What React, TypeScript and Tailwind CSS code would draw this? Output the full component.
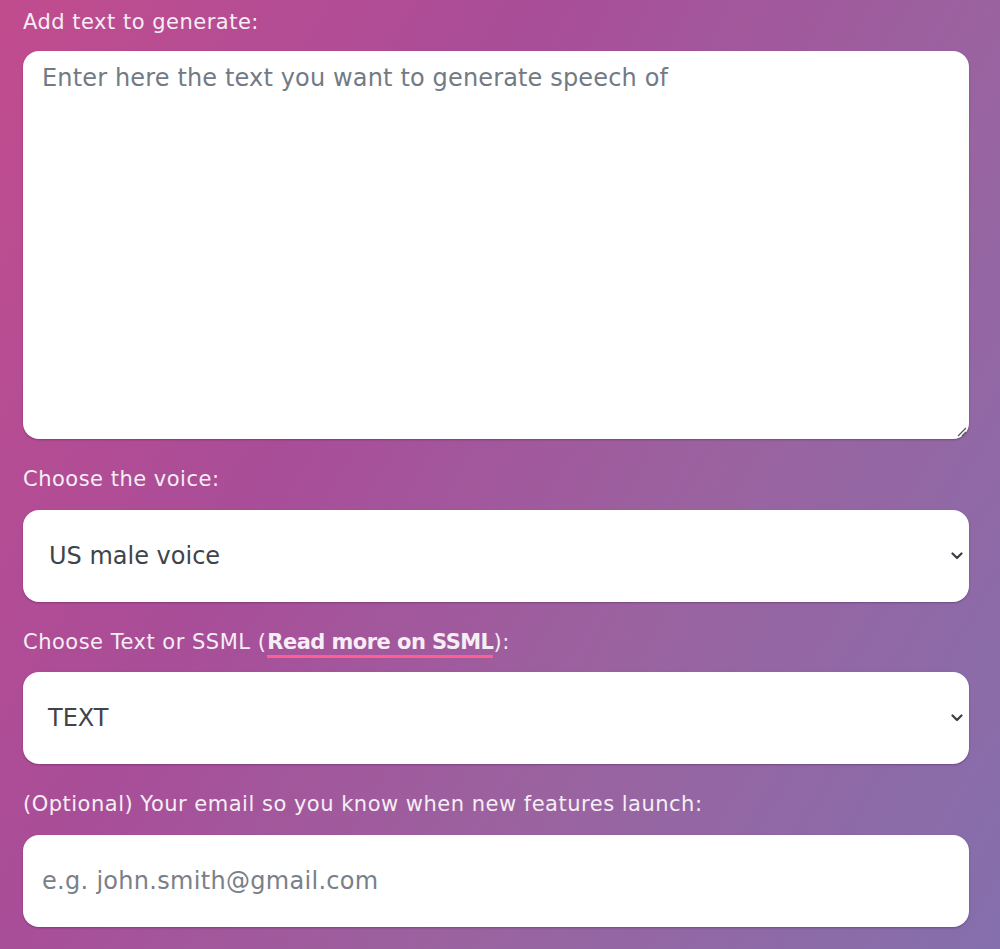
import React from "react";

const font = { fontFamily: '"DejaVu Sans", "Open Sans", sans-serif' };

function Chevron() {
  return (
    <svg width="12" height="8" viewBox="0 0 12 8" className="shrink-0">
      <path d="M1.5 1.5 L6 6 L10.5 1.5" fill="none" stroke="#3a3f46" strokeWidth="2.2" strokeLinecap="round" strokeLinejoin="round" />
    </svg>
  );
}

export default function App() {
  return (
    <div
      className="min-h-[949px] w-full bg-[linear-gradient(120deg,#c14c8e_0%,#a94d98_35%,#9a63a0_65%,#846fac_100%)] px-[23px] pt-[10px] pb-[22px] text-[#f6eef4]"
      style={font}
    >
      <label className="block text-[21px] leading-[24px] tracking-[0.5px]">Add text to generate:</label>
      <div className="relative mt-[17px] h-[388px] w-[946px] rounded-[16px] bg-white shadow-[0_1px_2px_rgba(60,20,70,0.35)]">
        <div className="px-[19px] pt-[12px] text-[24px] leading-[30px] tracking-[0.15px] text-[#727a84]">
          Enter here the text you want to generate speech of
        </div>
        <svg className="absolute bottom-[2px] right-[2px]" width="12" height="12" viewBox="0 0 12 12">
          <path d="M11 3 L3 11 M11 7 L7 11" stroke="#555" strokeWidth="1.2" />
        </svg>
      </div>

      <label className="mt-[28px] block text-[21px] leading-[24px] tracking-[0.5px]">Choose the voice:</label>
      <div className="mt-[19px] flex h-[92px] w-[946px] items-center justify-between rounded-[16px] bg-white pl-[26px] pr-[6px] shadow-[0_1px_2px_rgba(60,20,70,0.35)]">
        <span className="text-[24px] text-[#3f444b]">US male voice</span>
        <Chevron />
      </div>

      <label className="mt-[28px] block text-[21px] leading-[24px] tracking-[0.5px]">
        Choose Text or SSML (
        <span className="ml-[1px] font-bold tracking-[-0.55px] border-b-[3px] border-[#ff5f8f] pb-[1px]">Read more on SSML</span>
        ):
      </label>
      <div className="mt-[18px] flex h-[92px] w-[946px] items-center justify-between rounded-[16px] bg-white pl-[25px] pr-[6px] shadow-[0_1px_2px_rgba(60,20,70,0.35)]">
        <span className="text-[24px] text-[#3f444b]">TEXT</span>
        <Chevron />
      </div>

      <label className="mt-[28px] block text-[21px] leading-[24px] tracking-[0.5px]">
        (Optional) Your email so you know when new features launch:
      </label>
      <div className="mt-[19px] flex h-[92px] w-[946px] items-center rounded-[16px] bg-white pl-[19px] shadow-[0_1px_2px_rgba(60,20,70,0.35)]">
        <span className="text-[24px] tracking-[0.3px] text-[#7a8089]">e.g. john.smith@gmail.com</span>
      </div>
    </div>
  );
}
